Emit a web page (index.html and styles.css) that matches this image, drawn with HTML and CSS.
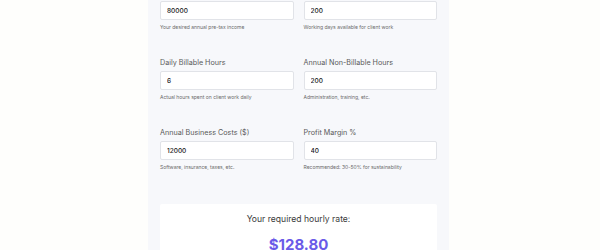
FILE: index.html
```html
<!DOCTYPE html>
<html>

<head>
    <meta charset="UTF-8">
    <meta name="viewport" content="width=device-width, initial-scale=1.0">
    <title>Freelance Hourly Rate Calculator</title>
    <link rel="stylesheet" href="styles.css">
</head>

<body>
    <div class="calculator">
        <div class="form-grid">
            <div class="field">
                <label for="income">Desired Annual Income ($)</label>
                <input id="income" type="text" value="80000">
                <small>Your desired annual pre-tax income</small>
            </div>
            <div class="field">
                <label for="days">Billable Days per Year</label>
                <input id="days" type="text" value="200">
                <small>Working days available for client work</small>
            </div>

            <div class="field">
                <label for="hours">Daily Billable Hours</label>
                <input id="hours" type="text" value="6">
                <small>Actual hours spent on client work daily</small>
            </div>
            <div class="field">
                <label for="nonbillable">Annual Non-Billable Hours</label>
                <input id="nonbillable" type="text" value="200">
                <small>Administration, training, etc.</small>
            </div>

            <div class="field">
                <label for="costs">Annual Business Costs ($)</label>
                <input id="costs" type="text" value="12000">
                <small>Software, insurance, taxes, etc.</small>
            </div>
            <div class="field">
                <label for="margin">Profit Margin %</label>
                <input id="margin" type="text" value="40">
                <small>Recommended: 30-50% for sustainability</small>
            </div>
        </div>

        <div class="result">
            <p class="result-label">Your required hourly rate:</p>
            <p class="result-value">$128.80</p>
        </div>
    </div>
</body>

</html>
```

FILE: styles.css
```css
html,
body {
    margin: 0;
    padding: 0;
}

body {
    font-family: Inter, "Noto Sans", Arial, sans-serif;
    background: #fefefc;
    color: #333;
    overflow: hidden;
}

.calculator {
    width: 277px;
    margin: -12px 0 0 148px;
    padding: 0 12px 20px 12px;
    background: #f7f8fb;
}

.form-grid {
    display: grid;
    grid-template-columns: 1fr 1fr;
    column-gap: 10px;
    row-gap: 28px;
}

.field {
    display: flex;
    flex-direction: column;
}

.field label {
    font-size: 7.2px;
    line-height: 10px;
    color: #5a5a5a;
    margin-bottom: 3px;
}

.field input {
    box-sizing: border-box;
    height: 19px;
    padding: 0 6px;
    border: 1px solid #e1e3e8;
    border-radius: 2px;
    background: #fff;
    font-family: inherit;
    font-size: 6.5px;
    font-weight: 500;
    color: #222;
    outline: none;
}

.field small {
    margin-top: 4px;
    font-size: 5px;
    line-height: 6px;
    color: #6a6a6a;
}

.result {
    margin-top: 34px;
    padding: 8px 10px 10px;
    background: #fff;
    border-radius: 2px;
    text-align: center;
}

.result-label {
    margin: 0;
    font-size: 8.6px;
    line-height: 14px;
    color: #3a3a3a;
}

.result-value {
    margin: 10px 0 0;
    font-size: 15px;
    line-height: 18px;
    font-weight: 700;
    color: #6a5ae8;
}
```
